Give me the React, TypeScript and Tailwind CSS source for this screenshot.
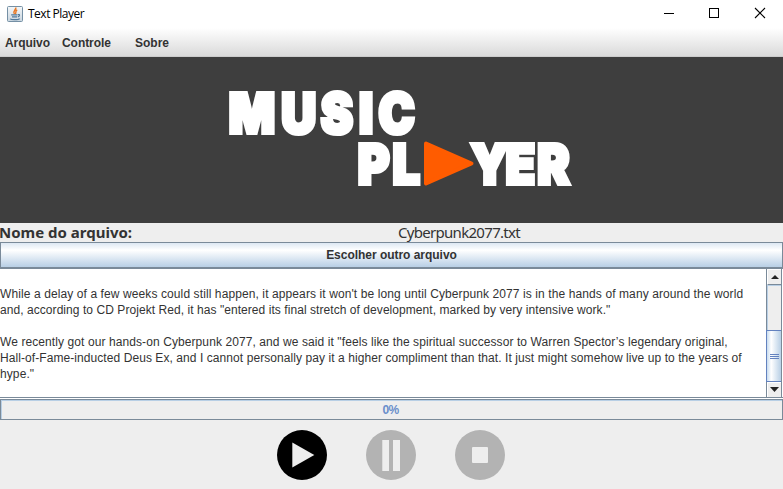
import React from "react";

function JavaIcon() {
  return (
    <svg width="16" height="16" viewBox="0 0 16 16" className="block">
      <defs>
        <linearGradient id="cup" x1="0" y1="0" x2="0" y2="1">
          <stop offset="0" stopColor="#f4f7f9" />
          <stop offset="1" stopColor="#c9d5df" />
        </linearGradient>
      </defs>
      <rect x="0.5" y="0.5" width="15" height="15" rx="1" fill="url(#cup)" stroke="#7590a5" />
      <path d="M8.9 1.5C9.3 4 5.2 4.6 7.4 8M10.2 4C7.6 5 9.8 6.2 8.2 8" fill="none" stroke="#e87722" strokeWidth="1.4" />
      <path d="M4.2 8.8H10.5M5 10.8H10M11 8.6C13.2 8 12.8 10.4 10.8 10.8M3.3 12.8C4 14 11.5 14 12.7 12.6" fill="none" stroke="#52799a" strokeWidth="1.2" />
    </svg>
  );
}

function TitleBar() {
  return (
    <header className="flex h-7 shrink-0 items-center bg-white pl-[7px]">
      <JavaIcon />
      <span className="ml-[5px] grow font-['Open_Sans',sans-serif] text-[12px] leading-4 tracking-[-0.5px] text-black">Text Player</span>
      <svg width="120" height="28" viewBox="0 0 120 28" fill="none" stroke="#000" shapeRendering="crispEdges">
        <path d="M1 13.5H11" />
        <rect x="46.5" y="8.5" width="9" height="9" />
        <path d="M92 8L102 18M102 8L92 18" shapeRendering="auto" strokeWidth="1.1" />
      </svg>
    </header>
  );
}

function MenuBar() {
  return (
    <nav className="flex h-[29px] shrink-0 border-b border-[#cccccc] bg-linear-to-b from-white to-[#dadada] pl-[5px] text-[12px] leading-[30px] font-bold">
      <span className="w-[57px] tracking-[-0.05px]">Arquivo</span>
      <span className="w-[73px] tracking-[-0.05px]">Controle</span>
      <span>Sobre</span>
    </nav>
  );
}

function Banner() {
  return (
    <section className="h-[166px] shrink-0 bg-[#3e3e3e]">
      <svg width="783" height="166" viewBox="0 57 783 166" className="block">
        <g fill="#fff" stroke="#fff" strokeWidth="4.2" strokeLinejoin="miter" className="font-['Inter',sans-serif] text-[55px] font-black">
          <text transform="translate(0 132.5) scale(0.88 1)" x="260 319.5 364.5 408 430">MUSIC</text>
          <text transform="translate(0 183.7) scale(0.88 1)" x="406.5 446">PL</text>
          <text transform="translate(0 183.7) scale(0.88 1)" x="535 574.5 610.5">YER</text>
        </g>
        <path d="M426 143.5L471.5 163.5L426 183.5Z" fill="#ff5c00" stroke="#ff5c00" strokeWidth="4" strokeLinejoin="round" />
      </svg>
    </section>
  );
}

function ScrollBar() {
  return (
    <div className="mr-px flex w-4 shrink-0 flex-col border-x border-[#7a8a99] bg-[#eeeeee]">
      <div className="flex h-4 items-center justify-center border-t border-b border-l border-t-white border-b-[#7a8a99] border-l-white">
        <svg width="8" height="4"><path d="M0 4L4 0L8 4Z" fill="#222" /></svg>
      </div>
      <div className="h-[45px] border-t border-l border-[#b8cfe5]" />
      <div className="-ml-px flex h-[52px] flex-col items-center justify-center gap-px border-y border-l border-[#6382bf] bg-linear-to-r from-[#c8dcef] via-white via-30% to-[#b8cfe5]">
        <i className="h-px w-[9px] bg-[#6382bf]" />
        <i className="h-px w-[9px] bg-[#6382bf]" />
        <i className="h-px w-[9px] bg-[#6382bf]" />
      </div>
      <div className="flex grow items-start justify-center border-t border-l border-white pt-[4px]">
        <svg width="9" height="5"><path d="M0 0H9L4.5 5Z" fill="#222" /></svg>
      </div>
    </div>
  );
}

function TextPane() {
  return (
    <div className="flex h-[129px] shrink-0 border-b border-[#7a8a99] bg-white">
      <div className="min-w-0 grow pt-[17px] text-[12px] leading-4 whitespace-nowrap">
        <p className="tracking-[0.1px]">While a delay of a few weeks could still happen, it appears it won't be long until Cyberpunk 2077 is in the hands of many around the world</p>
        <p className="tracking-[0.06px]">and, according to CD Projekt Red, it has "entered its final stretch of development, marked by very intensive work."</p>
        <p className="mt-4 tracking-[0.09px]">We recently got our hands-on Cyberpunk 2077, and we said it "feels like the spiritual successor to Warren Spector’s legendary original,</p>
        <p className="tracking-[0.073px]">Hall-of-Fame-inducted Deus Ex, and I cannot personally pay it a higher compliment than that. It just might somehow live up to the years of</p>
        <p className="tracking-[0.1px]">hype."</p>
      </div>
      <ScrollBar />
    </div>
  );
}

function Controls() {
  return (
    <div className="flex justify-center gap-[39px] pt-[10px] pr-[2px]">
      <svg width="50" height="50"><circle cx="25" cy="25" r="25" fill="#000" /><path d="M15.3 12.5L37.3 25L15.3 37.5Z" fill="#eee" /></svg>
      <svg width="50" height="50"><circle cx="25" cy="25" r="25" fill="#b3b3b3" /><path d="M16.3 10H23V41H16.3ZM27 10H34V41H27Z" fill="#eee" /></svg>
      <svg width="50" height="50"><circle cx="25" cy="25" r="25" fill="#b3b3b3" /><rect x="17" y="17" width="16" height="16" rx="1" fill="#eee" /></svg>
    </div>
  );
}

export default function App() {
  return (
    <main className="flex h-[489px] w-[783px] flex-col overflow-hidden bg-[#eeeeee] font-['Liberation_Sans',Arial,sans-serif] text-[#333333]">
      <TitleBar />
      <MenuBar />
      <Banner />
      <div className="flex h-[19px] shrink-0 font-['Noto_Sans',sans-serif] text-[15px] leading-[19px]">
        <span className="-ml-px w-[399px] font-bold">Nome do arquivo:</span>
        <span className="tracking-[-0.7px]">Cyberpunk2077.txt</span>
      </div>
      <button className="h-[27px] shrink-0 border border-b-2 border-[#7a8a99] bg-linear-to-b from-[#dde8f3] via-white via-30% to-[#b8cfe5] text-[12px] leading-[25px] font-bold tracking-[-0.03px]">
        Escolher outro arquivo
      </button>
      <TextPane />
      <div className="h-px shrink-0 bg-white" />
      <div className="h-[21px] shrink-0 border border-[#7a8a99]">
        <div className="h-full border-t border-l border-[#b8cfe5] pr-[3px] text-center text-[12px] leading-[18px] font-bold tracking-[-0.6px] text-[#6a8fcb]">0%</div>
      </div>
      <Controls />
    </main>
  );
}
